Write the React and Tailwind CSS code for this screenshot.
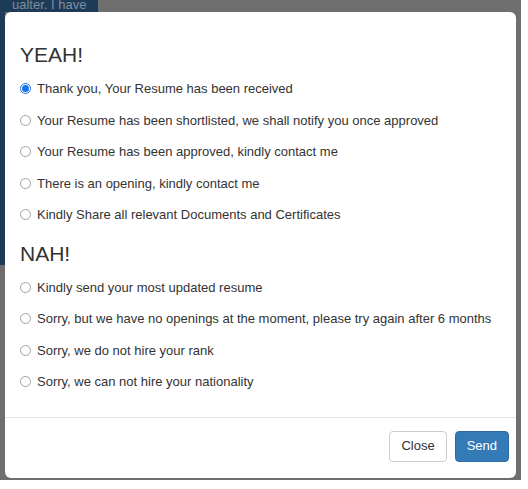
import { useState } from "react";

const yeah = [
  "Thank you, Your Resume has been received",
  "Your Resume has been shortlisted, we shall notify you once approved",
  "Your Resume has been approved, kindly contact me",
  "There is an opening, kindly contact me",
  "Kindly Share all relevant Documents and Certificates",
];

const nah = [
  "Kindly send your most updated resume",
  "Sorry, but we have no openings at the moment, please try again after 6 months",
  "Sorry, we do not hire your rank",
  "Sorry, we can not hire your nationality",
];

function Option({ text, value, selected, onSelect }) {
  const on = selected === value;
  return (
    <label className="flex items-center h-[31.5px] cursor-pointer" onClick={() => onSelect(value)}>
      <span
        className={
          on
            ? "w-[11px] h-[11px] rounded-full border border-[#1a73e8] bg-white flex items-center justify-center mr-[6px]"
            : "w-[11px] h-[11px] rounded-full border border-[#a0a0a0] bg-white mr-[6px]"
        }
      >
        {on && <span className="w-[7px] h-[7px] rounded-full bg-[#1a73e8]" />}
      </span>
      <span className="text-[13px] text-[#333] whitespace-nowrap">{text}</span>
    </label>
  );
}

export default function App() {
  const [selected, setSelected] = useState("y0");

  return (
    <div className="w-[528px] h-[489px] bg-white" style={{ fontFamily: '"Liberation Sans", Arial, sans-serif' }}>
      <div className="relative w-[521px] h-[480px] bg-[#6e6e6e] overflow-hidden">
        {/* dimmed page behind the modal */}
        <div className="absolute left-0 top-0 w-[98px] h-[12px] bg-[#1d3a56] text-[#7f8fa1] text-[13px] leading-[10px] pl-[12px] overflow-hidden">
          ualter. I have
        </div>
        <div className="absolute left-0 top-0 w-[5px] h-[265px] bg-[#1d3a56]" />

        <div className="absolute left-[5px] top-[12px] w-[511px] h-[466px] bg-white rounded-[6px] flex flex-col">
          <div className="flex-1 px-[15px] pt-[31px]">
            <h3 className="text-[21px] leading-[24px] text-[#333] mb-[6px]">YEAH!</h3>
            {yeah.map((t, i) => (
              <Option key={t} text={t} value={"y" + i} selected={selected} onSelect={setSelected} />
            ))}
            <h3 className="text-[21px] leading-[24px] text-[#333] mt-[11px] mb-[6px]">NAH!</h3>
            {nah.map((t, i) => (
              <Option key={t} text={t} value={"n" + i} selected={selected} onSelect={setSelected} />
            ))}
          </div>
          <div className="border-t border-[#e5e5e5] h-[61px] flex items-center justify-end gap-[8px] pr-[7px] pb-[4px]">
            <button className="h-[31px] px-[11px] text-[13px] text-[#333] bg-white border border-[#ccc] rounded-[4px]">
              Close
            </button>
            <button className="h-[31px] px-[11px] text-[13px] text-white bg-[#337ab7] border border-[#2e6da4] rounded-[4px]">
              Send
            </button>
          </div>
        </div>
      </div>
    </div>
  );
}
